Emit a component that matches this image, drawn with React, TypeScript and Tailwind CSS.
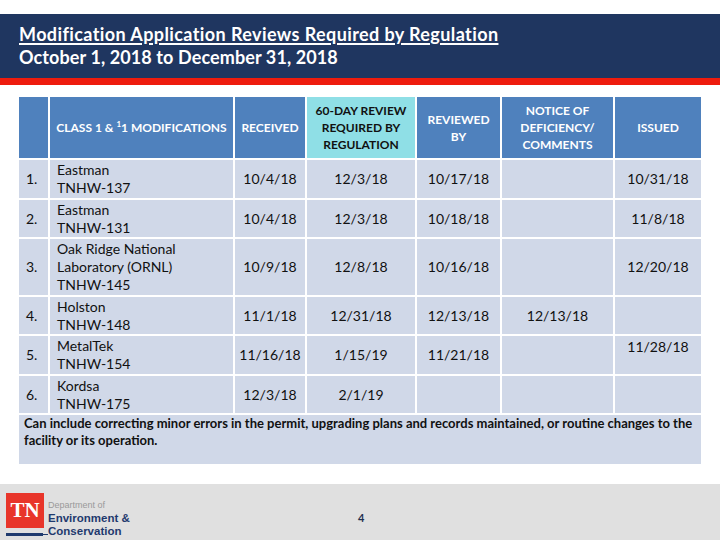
const rows = [
  { n: '1.', name: ['Eastman', 'TNHW-137'], rec: '10/4/18', due: '12/3/18', rev: '10/17/18', notice: '', issued: '10/31/18', h: 'h-[38px]' },
  { n: '2.', name: ['Eastman', 'TNHW-131'], rec: '10/4/18', due: '12/3/18', rev: '10/18/18', notice: '', issued: '11/8/18', h: 'h-[37px]' },
  { n: '3.', name: ['Oak Ridge National', 'Laboratory (ORNL)', 'TNHW-145'], rec: '10/9/18', due: '12/8/18', rev: '10/16/18', notice: '', issued: '12/20/18', h: 'h-[56px]' },
  { n: '4.', name: ['Holston', 'TNHW-148'], rec: '11/1/18', due: '12/31/18', rev: '12/13/18', notice: '12/13/18', issued: '', h: 'h-[37px]' },
  { n: '5.', name: ['MetalTek', 'TNHW-154'], rec: '11/16/18', due: '1/15/19', rev: '11/21/18', notice: '', issued: '11/28/18', h: 'h-[38px]', issuedTop: true },
  { n: '6.', name: ['Kordsa', 'TNHW-175'], rec: '12/3/18', due: '2/1/19', rev: '', notice: '', issued: '', h: 'h-[37px]' },
]

function Cell({ children, className = '' }: { children?: React.ReactNode; className?: string }) {
  return <div className={`flex items-center justify-center bg-[#d0d8e8] ${className}`}>{children}</div>
}

export default function App() {
  return (
    <div className="h-[540px] w-[720px] overflow-hidden bg-white font-['Lato',sans-serif] text-[#111]">
      <div className="h-[14px]" />
      <div className="flex h-[64px] flex-col justify-center bg-[#1f3660] pl-[19px] text-[18px] font-bold leading-[23px] text-white">
        <div className="tracking-[0.4px] underline decoration-[1.5px] underline-offset-[2px]">
          Modification Application Reviews Required by Regulation
        </div>
        <div className="tracking-[0.1px]">October 1, 2018 to December 31, 2018</div>
      </div>
      <div className="h-[7px] bg-[#ee1c0e]" />

      <div className="ml-[19px] mt-[12px] grid w-[682px] grid-cols-[29px_183px_70px_108px_83px_111px_86px] gap-[2px] text-[14px] leading-[18px]">
        <div className="h-[61px] bg-[#4f81bd]" />
        <div className="flex items-center justify-center bg-[#4f81bd] text-[12px] font-bold text-white">
          CLASS 1 &amp;&nbsp;<sup className="text-[8px]">1</sup>1 MODIFICATIONS
        </div>
        <div className="flex items-center justify-center bg-[#4f81bd] text-[12px] font-bold text-white">RECEIVED</div>
        <div className="flex items-center justify-center bg-[#8fdfe6] text-center text-[12px] font-bold leading-[17px] text-[#111]">
          60-DAY REVIEW<br />REQUIRED BY<br />REGULATION
        </div>
        <div className="flex items-center justify-center bg-[#4f81bd] text-center text-[12px] font-bold leading-[17px] text-white">
          REVIEWED<br />BY
        </div>
        <div className="flex items-center justify-center bg-[#4f81bd] text-center text-[12px] font-bold leading-[17px] text-white">
          NOTICE OF<br />DEFICIENCY/<br />COMMENTS
        </div>
        <div className="flex items-center justify-center bg-[#4f81bd] text-[12px] font-bold text-white">ISSUED</div>

        {rows.map((r) => (
          <div key={r.n} className="contents">
            <div className={`flex items-center bg-[#d0d8e8] pl-[7px] ${r.h}`}>{r.n}</div>
            <div className="flex flex-col justify-center bg-[#d0d8e8] pl-[7px]">
              {r.name.map((t) => (
                <span key={t}>{t}</span>
              ))}
            </div>
            <Cell>{r.rec}</Cell>
            <Cell>{r.due}</Cell>
            <Cell className={r.rev ? 'bg-[#92d050]' : ''}>{r.rev}</Cell>
            <Cell>{r.notice}</Cell>
            <Cell className={r.issuedTop ? 'items-start pt-[2px]' : ''}>{r.issued}</Cell>
          </div>
        ))}

        <div className="col-span-7 h-[49px] bg-[#d0d8e8] px-[5px] text-[13px] font-bold leading-[17px]">
          Can include correcting minor errors in the permit, upgrading plans and records maintained, or routine changes to the facility or its operation.
        </div>
      </div>

      <div className="mt-[20px] flex h-[57px] bg-[#e0e0e0]">
        <div className="relative ml-[6px] mt-[9px] h-[44px] w-[130px] font-['Liberation_Sans',sans-serif]">
          <div className="absolute left-0 top-0 flex h-[35px] w-[38px] items-center justify-center bg-[#e8352a] font-['Liberation_Serif',serif] text-[21px] font-bold text-white">
            TN
          </div>
          <span className="absolute left-[42px] top-[7px] text-[9px] leading-[10px] text-[#9a9a9a]">Department of</span>
          <span className="absolute left-[42px] top-[19px] text-[11.5px] font-bold leading-[13px] text-[#1f3a6e]">Environment &amp;</span>
          <span className="absolute left-[42px] top-[32px] text-[11.5px] font-bold leading-[13px] text-[#1f3a6e]">Conservation</span>
          <div className="absolute left-0 top-[40px] h-[3px] w-[37px] bg-[#1f3a6e]" />
          <div className="absolute left-[37px] top-[41px] h-[1px] w-[5px] bg-[#1f3a6e]" />
        </div>
        <div className="ml-[222px] mt-[27px] text-[11px] font-bold leading-[14px] text-[#1f2f4f]">4</div>
      </div>
    </div>
  )
}
